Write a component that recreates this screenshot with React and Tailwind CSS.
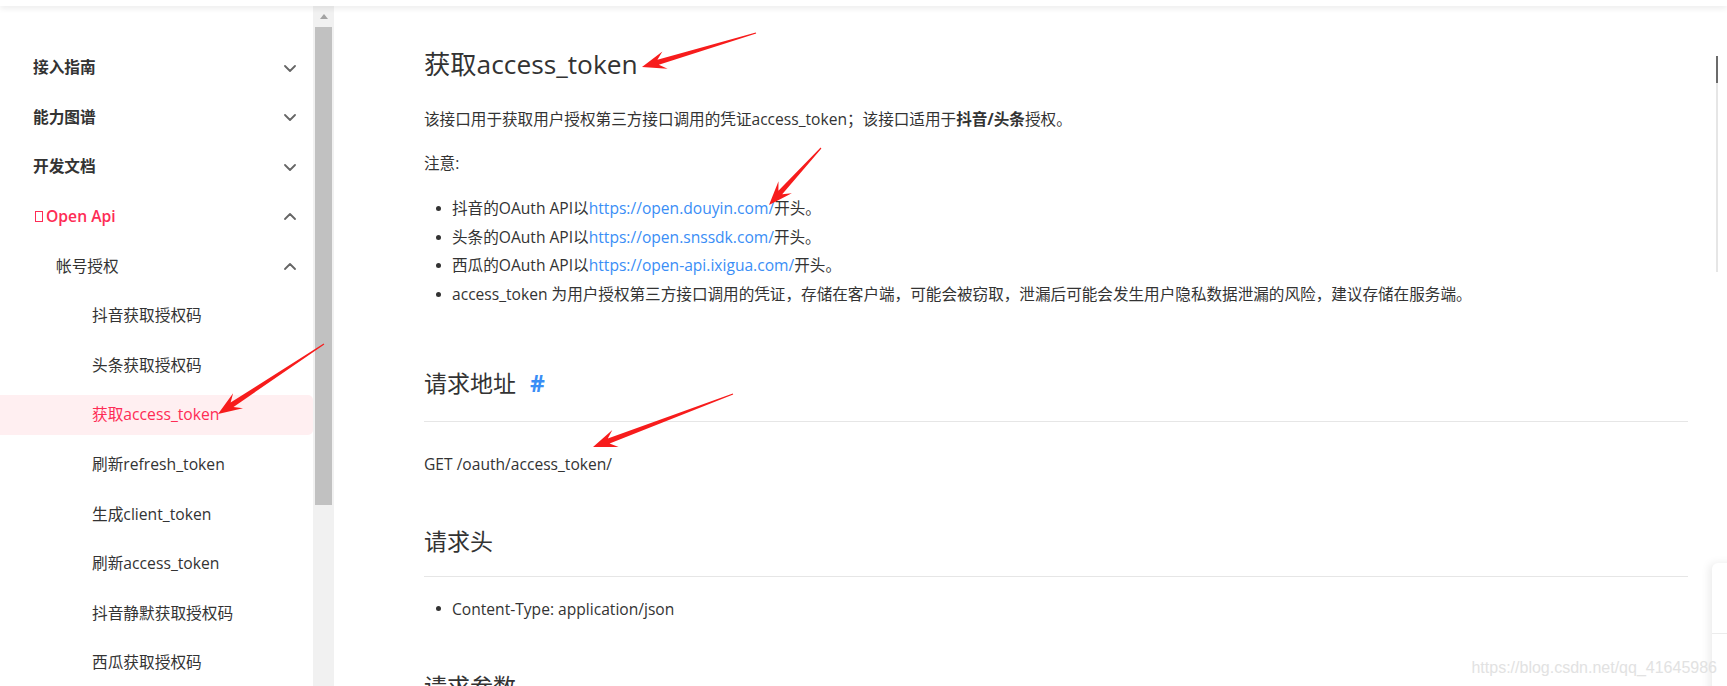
import React from "react";

const arrows = [
  { x1: 756, y1: 33, x2: 642, y2: 67 },
  { x1: 821, y1: 148, x2: 769, y2: 205 },
  { x1: 324, y1: 344, x2: 218, y2: 414 },
  { x1: 733, y1: 394, x2: 593, y2: 447 },
];

function arrowPoints({ x1, y1, x2, y2 }) {
  const H = 24;
  const W = 9;
  const dx = x2 - x1;
  const dy = y2 - y1;
  const L = Math.hypot(dx, dy);
  const ux = dx / L;
  const uy = dy / L;
  const nx = -uy;
  const ny = ux;
  const bx = x2 - ux * H;
  const by = y2 - uy * H;
  const kx = x2 - ux * H * 0.7;
  const ky = y2 - uy * H * 0.7;
  const pts = [
    [x1 + nx * 0.6, y1 + ny * 0.6],
    [kx + nx * 2.6, ky + ny * 2.6],
    [bx + nx * W, by + ny * W],
    [x2, y2],
    [bx - nx * W, by - ny * W],
    [kx - nx * 2.6, ky - ny * 2.6],
    [x1 - nx * 0.6, y1 - ny * 0.6],
  ];
  return pts.map(([a, b]) => `${a.toFixed(1)},${b.toFixed(1)}`).join(" ");
}

function Chevron({ up }) {
  return (
    <svg width="12" height="7" viewBox="0 0 12 7" className="shrink-0">
      <polyline
        points={up ? "1,6 6,1 11,6" : "1,1 6,6 11,1"}
        fill="none"
        stroke="#666"
        strokeWidth="1.8"
        strokeLinecap="round"
        strokeLinejoin="round"
      />
    </svg>
  );
}

function Dot() {
  return <span className="ml-[11.5px] mr-[11.5px] h-[5px] w-[5px] shrink-0 rounded-full bg-[#333]" />;
}

const subItems = [
  "抖音获取授权码",
  "头条获取授权码",
  "获取access_token",
  "刷新refresh_token",
  "生成client_token",
  "刷新access_token",
  "抖音静默获取授权码",
  "西瓜获取授权码",
];

export default function App() {
  return (
    <div className="relative h-[686px] w-[1727px] overflow-hidden bg-white font-['Open_Sans','Noto_Sans_CJK_SC',sans-serif] text-[#333]">
      {/* header remnant */}
      <div className="relative z-10 h-[6px] bg-white shadow-[0_2px_6px_rgba(0,0,0,0.09)]" />

      <div className="flex h-[680px]">
        {/* sidebar */}
        <div className="flex w-[334px] shrink-0">
          <nav className="flex w-[313px] flex-col gap-[9.6px] overflow-hidden pt-[42px] text-[15.7px]">
            {["接入指南", "能力图谱", "开发文档"].map((t) => (
              <div key={t} className="flex h-[40px] shrink-0 items-center justify-between pl-[33px] pr-[17px] font-semibold text-[#333]">
                <span>{t}</span>
                <Chevron />
              </div>
            ))}
            <div className="flex h-[40px] shrink-0 items-center justify-between pl-[35px] pr-[17px] font-semibold text-[#fe2c55]">
              <span className="flex items-center">
                <span className="mr-[3px] inline-block h-[11px] w-[8px] border border-[#fe2c55]" />
                Open Api
              </span>
              <Chevron up />
            </div>
            <div className="flex h-[40px] shrink-0 items-center justify-between pl-[56px] pr-[17px] text-[#333]">
              <span>帐号授权</span>
              <Chevron up />
            </div>
            {subItems.map((t, i) => (
              <div
                key={t}
                className={
                  i === 2
                    ? "flex h-[40px] shrink-0 items-center rounded-r-[5px] bg-[#ffeff1] pl-[92px] text-[#fe2c55]"
                    : "flex h-[40px] shrink-0 items-center pl-[92px] text-[#333]"
                }
              >
                {t}
              </div>
            ))}
          </nav>
          {/* scrollbar */}
          <div className="flex w-[21px] shrink-0 flex-col bg-[#f1f1f1] pl-[2px] pr-[2px]">
            <div className="flex h-[21px] items-center justify-center">
              <div className="h-0 w-0 border-x-[4.5px] border-b-[5px] border-x-transparent border-b-[#a3a3a3]" />
            </div>
            <div className="h-[478px] bg-[#c1c1c1]" />
          </div>
        </div>

        {/* main */}
        <main className="w-[1354px] shrink-0 pl-[90px] text-[15.6px]">
          <h1 className="mt-[40px] text-[26.3px] font-normal leading-[36px] text-[#333]">获取access_token</h1>
          <p className="mt-[23px] leading-[28px]">
            该接口用于获取用户授权第三方接口调用的凭证access_token；该接口适用于<b className="font-bold">抖音/头条</b>授权。
          </p>
          <p className="mt-[16px] leading-[28px]">注意:</p>
          <ul className="mt-[17px] leading-[28.7px]">
            <li className="flex items-center">
              <Dot />
              <span>
                抖音的OAuth API以<span className="text-[#3a8ef6]">https://open.douyin.com/</span>开头。
              </span>
            </li>
            <li className="flex items-center">
              <Dot />
              <span>
                头条的OAuth API以<span className="text-[#3a8ef6]">https://open.snssdk.com/</span>开头。
              </span>
            </li>
            <li className="flex items-center">
              <Dot />
              <span>
                西瓜的OAuth API以<span className="text-[#3a8ef6]">https://open-api.ixigua.com/</span>开头。
              </span>
            </li>
            <li className="flex items-center">
              <Dot />
              <span>
                access_token 为用户授权第三方接口调用的凭证，存储在客户端，可能会被窃取，泄漏后可能会发生用户隐私数据泄漏的风险，建议存储在服务端。
              </span>
            </li>
          </ul>

          <h2 className="mt-[58px] flex items-center border-b border-[#e6e6e6] pb-[22px] text-[23px] font-normal leading-[32px]">
            请求地址
            <span className="ml-[14px] font-bold text-[#3a8ef6]">#</span>
          </h2>
          <p className="mt-[28px] leading-[28px]">GET /oauth/access_token/</p>

          <h2 className="mt-[47px] border-b border-[#e6e6e6] pb-[19px] text-[23px] font-normal leading-[32px]">请求头</h2>
          <ul className="mt-[18px] leading-[28px]">
            <li className="flex items-center">
              <Dot />
              <span>Content-Type: application/json</span>
            </li>
          </ul>

          <h2 className="mt-[47px] text-[23px] font-normal leading-[32px]">请求参数</h2>
        </main>
      </div>

      {/* right toc rail */}
      <div className="absolute left-[1716px] top-[56px] flex h-[216px] w-[2px] flex-col bg-[#e6e6e6]">
        <div className="h-[27px] bg-[#6b6b6b]" />
      </div>

      {/* bottom-right floating card */}
      <div className="absolute left-[1712px] top-[563px] h-[200px] w-[60px] rounded-tl-[6px] bg-white shadow-[-3px_0_8px_rgba(0,0,0,0.08)]">
        <div className="mt-[70px] h-px bg-[#ececec]" />
      </div>

      {/* watermark */}
      <div className="absolute right-[10px] top-[657px] font-['Liberation_Sans',Arial,sans-serif] text-[16px] leading-[22px] text-[#e2e2e2]">
        https://blog.csdn.net/qq_41645986
      </div>

      {/* annotation arrows */}
      <svg className="pointer-events-none absolute left-0 top-0 z-20" width="1727" height="686" viewBox="0 0 1727 686">
        {arrows.map((a, i) => (
          <polygon key={i} points={arrowPoints(a)} fill="#f71c1c" />
        ))}
      </svg>
    </div>
  );
}
